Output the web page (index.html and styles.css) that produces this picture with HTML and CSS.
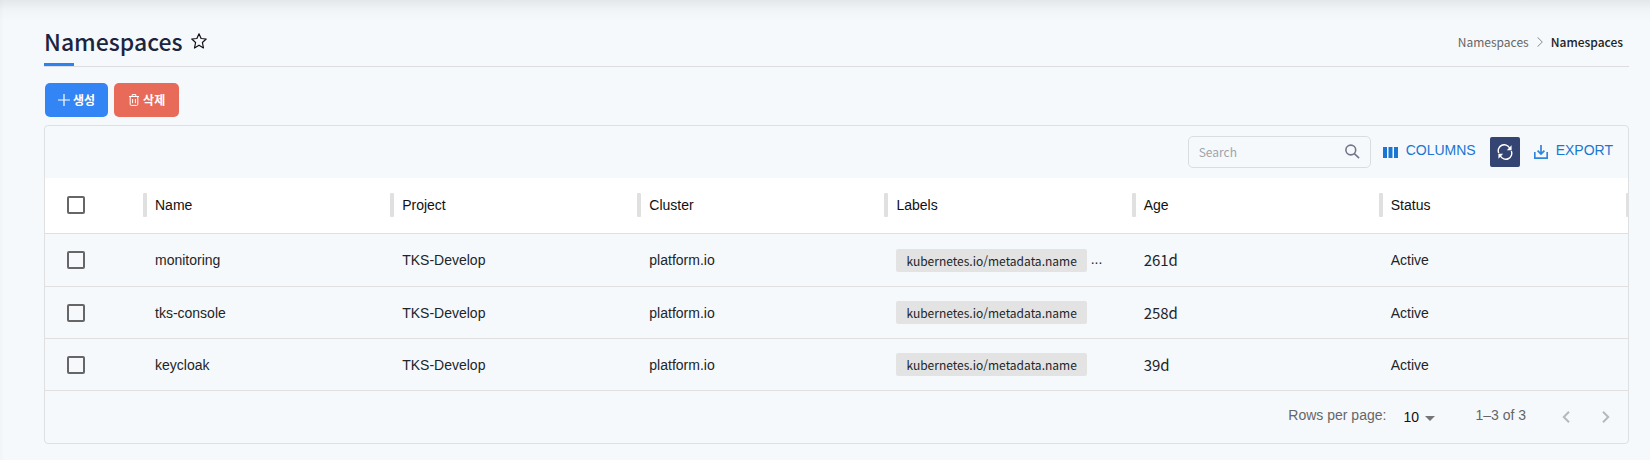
FILE: index.html
```html
<!DOCTYPE html>
<html lang="ko">
<head>
<meta charset="utf-8">
<title>Namespaces</title>
<link rel="stylesheet" href="styles.css">
</head>
<body>
<main class="page">
  <header class="page-header">
    <div class="title-group">
      <h1 class="title">Namespaces</h1>
      <button class="star" type="button" aria-label="Favorite">
        <svg width="16" height="16" viewBox="0 0 16 16" fill="none" stroke="#111" stroke-width="1.2" stroke-linejoin="round"><path d="M8 .8l2.1 4.7 5.1.5-3.8 3.5 1.1 5.5L8 12.2 3.5 15l1.1-5.5L.8 6l5.1-.5z"/></svg>
      </button>
    </div>
    <nav class="breadcrumb" aria-label="Breadcrumb">
      <a class="crumb" href="#">Namespaces</a>
      <svg width="6" height="10" viewBox="0 0 6 10" fill="none" stroke="#888"><path d="M.5.3L5.3 5 .5 9.7"/></svg>
      <span class="crumb-current" aria-current="page">Namespaces</span>
    </nav>
  </header>

  <div class="actions">
    <button class="btn btn-create" type="button">
      <svg width="12" height="12" viewBox="0 0 12 12" fill="none" stroke="#fff" stroke-width="1.2"><path d="M6 0v12M0 6h12"/></svg>
      <span>생성</span>
    </button>
    <button class="btn btn-delete" type="button">
      <svg width="12" height="12" viewBox="0 0 12 12" fill="none" stroke="#fff"><path d="M1 2.5h10M4.2 2.5V.6h3.6v1.9M2.2 2.5v7.8q0 1.1 1.1 1.1h5.4q1.1 0 1.1-1.1V2.5M4.6 5v4.2M7.4 5v4.2"/></svg>
      <span>삭제</span>
    </button>
  </div>

  <section class="card">
    <div class="toolbar">
      <div class="search">
        <input class="search-input" type="text" placeholder="Search" aria-label="Search">
        <svg width="16" height="16" viewBox="0 0 16 16" fill="none" stroke="#75758a" stroke-width="1.6"><circle cx="6.8" cy="6" r="4.9"/><path d="M10.3 9.6l4.8 4.6"/></svg>
      </div>
      <button class="tool tool-columns" type="button">
        <svg width="15" height="11" viewBox="0 0 15 11" fill="#1976d2"><path d="M0 0h4v11H0zM5.5 0h4v11h-4zM11 0h4v11h-4z"/></svg>
        <span class="tool-label">COLUMNS</span>
      </button>
      <button class="refresh" type="button" aria-label="Refresh">
        <svg width="16" height="16" viewBox="0 0 16 16" fill="none" stroke="#fff" stroke-width="1.4"><path d="M1.7 9A6 6 0 0 1 12.6 4M14.3 7A6 6 0 0 1 3.4 12"/><path fill="#fff" stroke="none" d="M14.6 1.2v5H9.8zM1.4 14.8v-5h4.8z"/></svg>
      </button>
      <button class="tool" type="button">
        <svg width="14" height="14" viewBox="0 0 14 14" fill="none" stroke="#2f85da" stroke-width="1.7"><path d="M7 0v8.6M3.6 5.6L7 9 10.4 5.6M.8 7v6.1h12.4V7"/></svg>
        <span class="tool-label">EXPORT</span>
      </button>
    </div>

    <table class="grid">
      <thead>
        <tr>
          <th class="col-check"><input class="check" type="checkbox" aria-label="Select all rows"></th>
          <th>Name</th><th>Project</th><th>Cluster</th><th>Labels</th><th>Age</th><th>Status</th>
        </tr>
      </thead>
      <tbody>
        <tr>
          <td class="col-check"><input class="check" type="checkbox" aria-label="Select monitoring"></td>
          <td>monitoring</td><td>TKS-Develop</td><td>platform.io</td>
          <td><span class="chip">kubernetes.io/metadata.name</span> <span class="more">...</span></td>
          <td class="age">261d</td><td>Active</td>
        </tr>
        <tr>
          <td class="col-check"><input class="check" type="checkbox" aria-label="Select tks-console"></td>
          <td>tks-console</td><td>TKS-Develop</td><td>platform.io</td>
          <td><span class="chip">kubernetes.io/metadata.name</span></td>
          <td class="age">258d</td><td>Active</td>
        </tr>
        <tr>
          <td class="col-check"><input class="check" type="checkbox" aria-label="Select keycloak"></td>
          <td>keycloak</td><td>TKS-Develop</td><td>platform.io</td>
          <td><span class="chip">kubernetes.io/metadata.name</span></td>
          <td class="age">39d</td><td>Active</td>
        </tr>
      </tbody>
    </table>

    <footer class="pager">
      <label class="pager-label" for="rows">Rows per page:</label>
      <div class="select-wrap">
        <select class="rows" id="rows"><option>10</option><option>25</option><option>50</option></select>
        <svg class="caret" width="10" height="5" viewBox="0 0 10 5" fill="#757575"><path d="M0 0h10L5 5z"/></svg>
      </div>
      <span class="pager-label range">1–3 of 3</span>
      <button class="page-btn" type="button" aria-label="Previous page" disabled>
        <svg width="8" height="12" viewBox="0 0 8 12" fill="none" stroke="#b6b8ba" stroke-width="2"><path d="M7 .8L1.8 6 7 11.2"/></svg>
      </button>
      <button class="page-btn" type="button" aria-label="Next page" disabled>
        <svg width="8" height="12" viewBox="0 0 8 12" fill="none" stroke="#b6b8ba" stroke-width="2"><path d="M1 .8L6.2 6 1 11.2"/></svg>
      </button>
    </footer>
  </section>
</main>
</body>
</html>
```

FILE: styles.css
```css
* { box-sizing: border-box; }

body {
  margin: 0;
  background: #f5f9fc;
  color: #212529;
  font-family: "Liberation Sans", Arial, "Noto Sans CJK KR", sans-serif;
  font-size: 14px;
}

button {
  border: 0;
  padding: 0;
  background: none;
  font: inherit;
  color: inherit;
}

svg { display: block; flex: none; }

.page {
  min-height: 100vh;
  padding: 16px 21px 16px 44px;
  background:
    linear-gradient(to bottom, rgba(0, 0, 0, 0.07), rgba(0, 0, 0, 0.02) 10px, transparent 22px),
    linear-gradient(to right, rgba(0, 0, 0, 0.02), transparent 4px);
}

.page-header {
  display: flex;
  align-items: center;
  justify-content: space-between;
  height: 51px;
  padding-right: 6px;
  border-bottom: 1px solid #dddde0;
  position: relative;
}

.page-header::after {
  content: "";
  position: absolute;
  left: 0;
  bottom: 0;
  width: 30px;
  height: 3px;
  background: #2c82ee;
}

.title-group { display: flex; align-items: center; gap: 8px; }

.title {
  margin: 0;
  font: 500 23px/36px "Noto Sans CJK KR", sans-serif;
  color: #1c2540;
}

.breadcrumb {
  display: flex;
  align-items: center;
  gap: 8px;
  padding-top: 2px;
  font: 400 12px/20px "Noto Sans CJK KR", sans-serif;
}

.crumb { color: #666; text-decoration: none; }
.crumb-current { color: #222; font-weight: 500; }

.actions { display: flex; gap: 6px; padding: 16px 1px 8px; }

.btn {
  display: flex;
  align-items: center;
  justify-content: center;
  gap: 3px;
  height: 34px;
  padding: 0 13px;
  border-radius: 5px;
  color: #fff;
  font: 700 12px/18px "Noto Sans CJK KR", sans-serif;
}

.btn-create { background: #3384f5; }
.btn-delete { padding: 0 14px; background: #e86a58; }

.card {
  border: 1px solid #dee0e2;
  border-radius: 4px;
  overflow: hidden;
}

.toolbar {
  display: flex;
  align-items: center;
  justify-content: flex-end;
  height: 52px;
  padding-right: 15px;
}

.search {
  display: flex;
  align-items: center;
  width: 183px;
  height: 32px;
  padding: 0 10px;
  margin-right: 12px;
  border: 1px solid #dbdcde;
  border-radius: 5px;
}

.search-input {
  flex: 1;
  min-width: 0;
  padding: 0;
  border: 0;
  outline: 0;
  background: none;
  font: 400 12px/20px "Noto Sans CJK KR", sans-serif;
}

.search-input::placeholder { color: #a0a4ab; opacity: 1; }

.tool {
  display: flex;
  align-items: center;
  gap: 8px;
  color: #1976d2;
}

.tool-columns { margin-right: 14px; }

.tool-label { padding-bottom: 4px; }

.refresh {
  display: grid;
  place-items: center;
  width: 30px;
  height: 30px;
  margin-right: 14px;
  border-radius: 2px;
  background: #344574;
}

.grid {
  width: 100%;
  table-layout: fixed;
  border-collapse: separate;
  border-spacing: 0;
}

.grid th,
.grid td {
  height: 52px;
  padding: 0 10px;
  border-bottom: 1px solid #e0e0e0;
  text-align: left;
  font-weight: 400;
  white-space: nowrap;
}

.grid th {
  position: relative;
  height: 56px;
  padding-bottom: 2px;
  background: #fff;
  color: #111;
}

.grid th::after {
  content: "";
  position: absolute;
  z-index: 1;
  top: 15px;
  right: -2px;
  width: 4px;
  height: 24px;
  border-radius: 1px;
  background: #e0e0e0;
}

.grid tbody tr:first-child td { height: 53px; }

.grid .col-check { width: 100px; padding-left: 22px; }

.check {
  display: block;
  appearance: none;
  width: 18px;
  height: 18px;
  margin: 0;
  border: 2px solid #666;
  border-radius: 2px;
}

.check:checked { background: #1976d2; border-color: #1976d2; }

.chip {
  display: inline-block;
  padding: 0 10px;
  border-radius: 2px;
  background: #e3e3e3;
  font: 400 12px/23px "Noto Sans CJK KR", sans-serif;
  vertical-align: middle;
}

.grid .age { font: 400 15px/22px "Noto Sans CJK KR", sans-serif; }

.pager {
  display: flex;
  align-items: center;
  justify-content: flex-end;
  height: 52px;
  padding-right: 2px;
  color: #666;
}

.pager-label { padding-bottom: 4px; }

.select-wrap { position: relative; margin: 0 40px 0 17px; }

.rows {
  display: block;
  appearance: none;
  width: 32px;
  padding: 0;
  border: 0;
  background: none;
  font: inherit;
  color: #111;
}

.caret { position: absolute; right: 0; top: 7px; pointer-events: none; }

.range { margin-right: 20px; }

.page-btn { display: grid; place-items: center; width: 40px; height: 40px; }
```
